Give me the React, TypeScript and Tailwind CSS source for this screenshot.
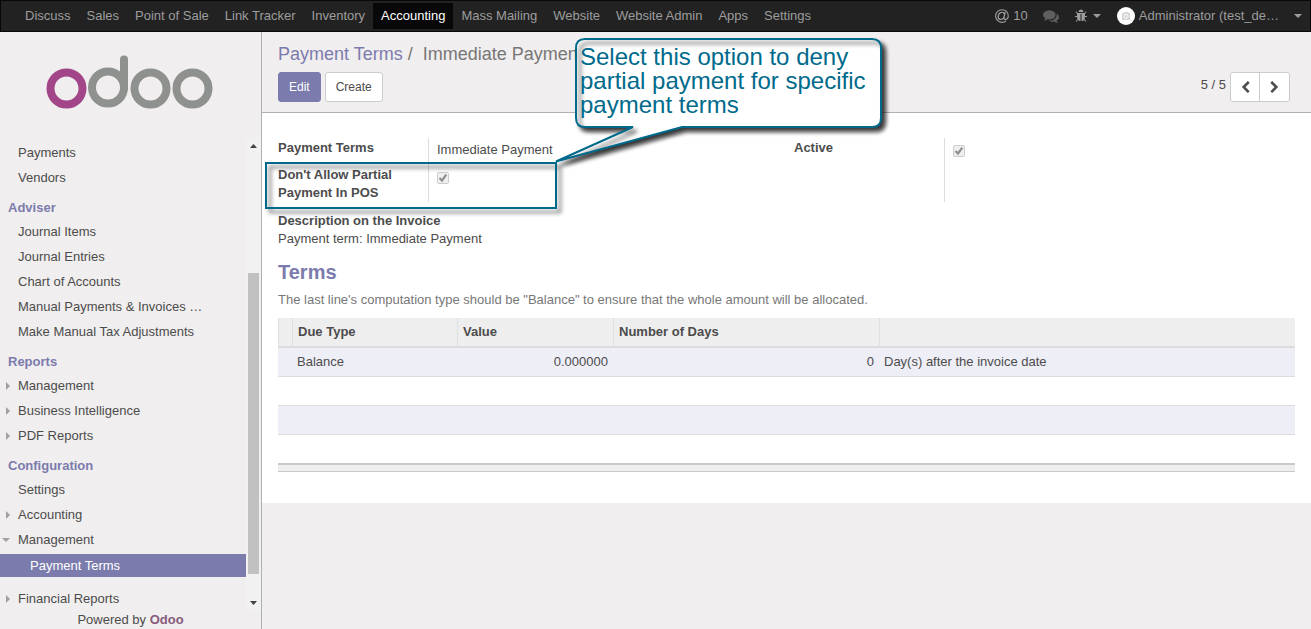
import type { ReactNode } from "react";

const apps = [
  "Discuss",
  "Sales",
  "Point of Sale",
  "Link Tracker",
  "Inventory",
  "Accounting",
  "Mass Mailing",
  "Website",
  "Website Admin",
  "Apps",
  "Settings",
];

type Item = { label: string; state?: "closed" | "open"; child?: string };
type Section = { title?: string; items: Item[] };

const sections: Section[] = [
  { items: [{ label: "Payments" }, { label: "Vendors" }] },
  {
    title: "Adviser",
    items: [
      { label: "Journal Items" },
      { label: "Journal Entries" },
      { label: "Chart of Accounts" },
      { label: "Manual Payments & Invoices …" },
      { label: "Make Manual Tax Adjustments" },
    ],
  },
  {
    title: "Reports",
    items: [
      { label: "Management", state: "closed" },
      { label: "Business Intelligence", state: "closed" },
      { label: "PDF Reports", state: "closed" },
    ],
  },
  {
    title: "Configuration",
    items: [
      { label: "Settings" },
      { label: "Accounting", state: "closed" },
      { label: "Management", state: "open", child: "Payment Terms" },
      { label: "Financial Reports", state: "closed" },
    ],
  },
];

const glyphs = {
  at: "M1100 775q0-108-53.5-169t-147.5-61q-63 0-124 30.5t-110 84.5-79.5 137-30.5 180q0 112 53.5 173t150.5 61q96 0 176-66.5t122.5-166 42.5-203.5zm564 121q0 111-37 197t-98.5 135-131.5 74.5-145 27.5q-6 .5-15.5.5t-16.5.5q-95 0-142-53-28-33-33-83-52 66-131.5 110t-173.5 44q-161 0-249.5-95.5t-88.5-269.5q0-157 66-290t179-210.5 246-77.5q87 0 155 35.5t106 99.5l2-19 11-56q1-6 5.5-12t9.5-6h118q5 0 11 13 5 6 3 16l-120 614q-5 24-5 48 0 39 12.500 52t44.500 13q28-1 57-5.500t73-24 77-50 57-89.500 24-137q0-292-174-466t-466-174q-130 0-248.500 51t-204 136.500-136.500 204-51 248.500 51 248.500 136.500 204 204 136.500 248.500 51q228 0 405-144 11-9 24-8t21 12l41 49q8 12 7 24-2 13-12 22-102 83-227.500 128t-258.500 45q-156 0-298-61t-245-164-164-245-61-298 61-298 164-245 245-164 298-61q344 0 556 212t212 556z",
  comments:
    "M1408 768q0 139-94 257t-256.5 186.5-353.5 68.5q-86 0-176-16-124 88-278 128-36 9-86 16h-3q-11 0-20.5-8t-11.5-21q-1-3-1-6.5t.5-6.5 2-6l2.5-5 3.5-5.5 4-5 4.5-5 4-4.5q5-6 23-25t26-29.5 22.5-29 25-38.5 20.5-44q-124-72-195-177t-71-224q0-139 94-257t256.5-186.5 353.5-68.5 353.5 68.5 256.5 186.5 94 257zm384 256q0 120-71 224.5t-195 176.5q10 24 20.5 44t25 38.5 22.5 29 26 29.5 23 25q1 1 4 4.5t4.5 5 4 5 3.5 5.5l2.5 5t2 6 .5 6.5-1 6.5q-3 14-13 22t-22 7q-50-7-86-16-154-40-278-128-90 16-176 16-271 0-472-132 58 4 88 4 161 0 309-45t264-129q125-92 192-212t67-254q0-77-23-152 129 71 204 178t75 230z",
  bug: "M1696 960q0 26-19 45t-45 19h-224q0 171-67 290l208 209q19 19 19 45t-19 45q-18 19-45 19t-45-19l-198-197q-5 5-15 13t-42 28.5-65 36.5-82 29-97 13v-896h-128v896q-51 0-101.5-13.5t-87-33-66-39-43.5-32.5l-15-14-183 207q-20 21-48 21-24 0-43-16-19-18-20.5-44.5t15.5-46.5l202-227q-58-114-58-274h-224q-26 0-45-19t-19-45 19-45 45-19h224v-294l-173-173q-19-19-19-45t19-45 45-19 45 19l173 173h844l173-173q19-19 45-19t45 19 19 45-19 45l-173 173v294h224q26 0 45 19t19 45zm-480-576h-640q0-133 93.5-226.5t226.5-93.5 226.5 93.5 93.5 226.5z",
  left: "M1427 301l-531 531 531 531q19 19 19 45t-19 45l-166 166q-19 19-45 19t-45-19l-742-742q-19-19-19-45t19-45l742-742q19-19 45-19t45 19l166 166q19 19 19 45t-19 45z",
  right:
    "M1363 877l-742 742q-19 19-45 19t-45-19l-166-166q-19-19-19-45t19-45l531-531-531-531q-19-19-19-45t19-45l166-166q19-19 45-19t45 19l742 742q19 19 19 45t-19 45z",
};

function Glyph({ name, className }: { name: keyof typeof glyphs; className: string }) {
  return (
    <svg viewBox="0 0 1792 1792" className={className} fill="currentColor" aria-hidden="true">
      <path d={glyphs[name]} />
    </svg>
  );
}

function Caret() {
  return (
    <svg viewBox="0 0 8 4" className="h-1 w-2" fill="currentColor" aria-hidden="true">
      <path d="M0 0h8L4 4z" />
    </svg>
  );
}

function TopBar() {
  return (
    <header className="flex h-8 shrink-0 items-center border border-[#080808] bg-[#222] pr-2 pl-4 text-[#9d9d9d]">
      <nav className="flex">
        {apps.map((app) => (
          <a
            key={app}
            href="#"
            className={
              app === "Accounting"
                ? "bg-[#080808] px-2 leading-[26px] whitespace-nowrap text-white"
                : "px-2 leading-[26px] whitespace-nowrap"
            }
          >
            {app}
          </a>
        ))}
      </nav>
      <div className="ml-auto flex items-center">
        <button className="flex items-center gap-[3px]">
          <Glyph name="at" className="size-4" />
          10
        </button>
        <button className="ml-[15px] text-[#5f5f5f]" aria-label="Conversations">
          <Glyph name="comments" className="size-4" />
        </button>
        <button className="ml-[15px] flex items-center gap-[5px]" aria-label="Debug">
          <Glyph name="bug" className="size-[14px]" />
          <Caret />
        </button>
        <button className="ml-4 flex items-center gap-1">
          <svg viewBox="0 0 18 18" className="size-[18px]" aria-hidden="true">
            <circle cx="9" cy="9" r="9" fill="#fff" />
            <path d="M5 6h2l1-1h3l1 1h1v7H5z" fill="#d4d4d4" />
            <circle cx="9" cy="9.300" r="2" fill="none" stroke="#fff" strokeWidth="1" />
          </svg>
          Administrator (test_de…
          <span className="ml-[11px]">
            <Caret />
          </span>
        </button>
      </div>
    </header>
  );
}

function Logo() {
  return (
    <svg viewBox="0 0 168 54" className="h-[54px] w-[168px]" fill="none" strokeWidth="8" role="img" aria-label="Odoo">
      <circle cx="20.500" cy="33.500" r="16" stroke="#a24689" />
      <g stroke="#8f918f">
        <circle cx="62" cy="32.500" r="16" />
        <path d="M78 4.500V33" strokeLinecap="round" />
        <circle cx="104.500" cy="33.500" r="16" />
        <circle cx="146.500" cy="33.500" r="16" />
      </g>
    </svg>
  );
}

function Sidebar() {
  return (
    <aside className="flex w-[262px] shrink-0 flex-col border-r border-[#afafb6]">
      <div className="flex h-[106px] shrink-0 pt-[23px] pl-[46px]">
        <Logo />
      </div>
      <div className="flex min-h-0 flex-1">
        <nav className="min-w-0 flex-1 overflow-hidden pt-[2px]">
          {sections.map((section, i) => (
            <section key={i}>
              {section.title && (
                <h2 className="pt-[9px] pb-[2px] pl-2 font-bold text-[#7c7bad]">{section.title}</h2>
              )}
              <ul>
                {section.items.map((item) => (
                  <li key={item.label}>
                    <a href="#" className="flex h-[25px] items-center">
                      <span className="flex w-[18px] shrink-0 text-[#a0a0a0]">
                        {item.state === "closed" && (
                          <svg viewBox="0 0 4 8" className="ml-[6px] h-2 w-1" fill="currentColor" aria-hidden="true">
                            <path d="M0 0v8l4-4z" />
                          </svg>
                        )}
                        {item.state === "open" && (
                          <span className="ml-[2px]">
                            <Caret />
                          </span>
                        )}
                      </span>
                      {item.label}
                    </a>
                    {item.child && (
                      <a href="#" className="mt-[2px] mb-[9px] block bg-[#7c7bad] pl-[30px] leading-[23px] text-white">
                        {item.child}
                      </a>
                    )}
                  </li>
                ))}
              </ul>
            </section>
          ))}
        </nav>
        <div className="flex w-[15px] flex-col items-center bg-[#f1f1f1] text-[#444]" aria-hidden="true">
          <svg viewBox="0 0 15 17" className="h-[17px] w-[15px] shrink-0" fill="currentColor">
            <path d="M4 10h7L7.500 6z" />
          </svg>
          <div className="h-[118px]" />
          <div className="flex-1 self-stretch px-[2px]">
            <div className="h-full bg-[#c1c1c1]" />
          </div>
          <div className="h-5" />
          <svg viewBox="0 0 15 17" className="h-[17px] w-[15px] shrink-0" fill="currentColor">
            <path d="M4 7h7l-3.500 4z" />
          </svg>
        </div>
      </div>
      <footer className="shrink-0 text-center">
        Powered by{" "}
        <a href="#" className="font-bold text-[#875a7b]">
          Odoo
        </a>
      </footer>
    </aside>
  );
}

function ControlPanel() {
  return (
    <div className="flex h-[81px] shrink-0 items-start justify-between border-b border-[#afafb6] pr-[21px] pl-4">
      <div>
        <h1 className="pt-[10px] text-lg leading-6 text-[#777]">
          <a href="#" className="text-[#7c7bad]">
            Payment Terms
          </a>{" "}
          / <span className="ml-[5px]">Immediate Payment</span>
        </h1>
        <div className="mt-[6px] flex gap-1 text-xs">
          <button className="h-[30px] rounded-[3px] border border-[#7c7bad] bg-[#7c7bad] px-[10px] text-white">Edit</button>
          <button className="h-[30px] rounded-[3px] border border-[#ccc] bg-white px-[10px]">Create</button>
        </div>
      </div>
      <div className="flex items-start gap-1 pt-10">
        <span className="pt-1">5 / 5</span>
        <div className="flex rounded-[3px] border border-[#ccc] bg-white">
          <button className="flex h-7 w-[29px] items-center justify-center border-r border-[#ccc]" aria-label="Previous">
            <Glyph name="left" className="size-[13px]" />
          </button>
          <button className="flex h-7 w-[29px] items-center justify-center" aria-label="Next">
            <Glyph name="right" className="size-[13px]" />
          </button>
        </div>
      </div>
    </div>
  );
}

function Tick({ id }: { id: string }) {
  return (
    <span className="grid size-3">
      <input
        id={id}
        type="checkbox"
        defaultChecked
        disabled
        className="col-start-1 row-start-1 size-3 appearance-none rounded-[2px] border border-[#ccc] bg-[#f0f0f0]"
      />
      <svg viewBox="0 0 12 12" className="col-start-1 row-start-1 size-3" aria-hidden="true">
        <path d="M2.500 6l2.500 2.500L9.300 2.700" fill="none" stroke="#8f8f8f" strokeWidth="2.200" />
      </svg>
    </span>
  );
}

function Th({ children }: { children?: ReactNode }) {
  return (
    <th className="border-b-2 border-l border-b-[#dcdcdc] border-l-[#dfdfdf] px-[5px] text-left font-bold">
      {children}
    </th>
  );
}

function Sheet() {
  return (
    <div className="bg-white px-4 pt-[25px] pb-[31px]">
      <div className="grid grid-cols-2 gap-[15px]">
        <div className="grid grid-cols-[150px_1fr] grid-rows-[27px_37px]">
          <span className="pt-px font-bold">Payment Terms</span>
          <span className="border-l border-[#ddd] pt-[3px] pl-2">Immediate Payment</span>
          <label htmlFor="no-partial" className="pt-px pr-4 font-bold">
            Don't Allow Partial Payment In POS
          </label>
          <div className="border-l border-[#ddd] pt-[7px] pl-2">
            <Tick id="no-partial" />
          </div>
        </div>
        <div className="grid grid-cols-[150px_1fr]">
          <label htmlFor="active" className="pt-px font-bold">
            Active
          </label>
          <div className="border-l border-[#ddd] pt-[7px] pl-2">
            <Tick id="active" />
          </div>
        </div>
      </div>
      <p className="mt-[10px] font-bold">Description on the Invoice</p>
      <p>Payment term: Immediate Payment</p>
      <h2 className="mt-3 text-xl leading-6 font-bold text-[#7c7bad]">Terms</h2>
      <p className="mt-[7px] text-[#777]">
        The last line's computation type should be "Balance" to ensure that the whole amount will be allocated.
      </p>
      <table className="mt-[9px] w-full table-fixed border-separate border-spacing-0">
        <colgroup>
          <col className="w-[14px]" />
          <col className="w-[165px]" />
          <col className="w-[156px]" />
          <col className="w-[266px]" />
          <col />
        </colgroup>
        <thead>
          <tr className="h-[30px] bg-[#eee]">
            <Th />
            <Th>Due Type</Th>
            <Th>Value</Th>
            <Th>Number of Days</Th>
            <Th />
          </tr>
        </thead>
        <tbody className="[&_td]:border-[#ddd] [&_td]:px-[5px]">
          <tr className="h-[29px] bg-[#eeeef6] [&>td]:border-b">
            <td />
            <td>Balance</td>
            <td className="text-right">0.000000</td>
            <td className="text-right">0</td>
            <td>Day(s) after the invoice date</td>
          </tr>
          <tr className="h-[29px] [&>td]:border-b">
            <td colSpan={5} />
          </tr>
          <tr className="h-[29px] bg-[#eeeef6] [&>td]:border-b">
            <td colSpan={5} />
          </tr>
          <tr className="h-7">
            <td colSpan={5} />
          </tr>
        </tbody>
        <tfoot>
          <tr className="h-[9px] bg-[#eee]">
            <td colSpan={5} className="border-t-2 border-b border-[#cacaca]" />
          </tr>
        </tfoot>
      </table>
    </div>
  );
}

const bubble =
  "M585 39H872Q881 39 881 48V118Q881 127 872 127H682L556 161.500L633 127H585Q576 127 576 118V48Q576 39 585 39Z";

function Callout() {
  return (
    <div className="pointer-events-none">
      <div className="absolute top-[130px] left-[3px] h-[47px] w-[292px] border-2 border-[#006a8c] drop-shadow-[4px_4px_2px_rgba(0,0,0,0.6)]" />
      <svg viewBox="546 32 354 150" className="absolute top-0 left-[284px] h-[150px] w-[354px]" aria-hidden="true">
        <path d={bubble} fill="#fff" className="drop-shadow-[4px_4px_2px_rgba(0,0,0,0.8)]" />
        <path
          d={bubble}
          fill="none"
          stroke="#006a8c"
          strokeWidth="2"
          className="drop-shadow-[4px_4px_2px_rgba(0,0,0,0.6)]"
        />
      </svg>
      <p className="absolute top-[13px] left-[318px] w-[296px] text-2xl leading-6 text-[#006a8c]">
        Select this option to deny partial payment for specific payment terms
      </p>
    </div>
  );
}

export default function App() {
  return (
    <div className="flex h-screen flex-col bg-[#f0eeee] font-['Liberation_Sans',Arial,sans-serif] text-[13px] leading-[18px] text-[#4c4c4c]">
      <TopBar />
      <div className="flex min-h-0 flex-1">
        <Sidebar />
        <main className="relative min-w-0 flex-1">
          <ControlPanel />
          <Sheet />
          <Callout />
        </main>
      </div>
    </div>
  );
}
